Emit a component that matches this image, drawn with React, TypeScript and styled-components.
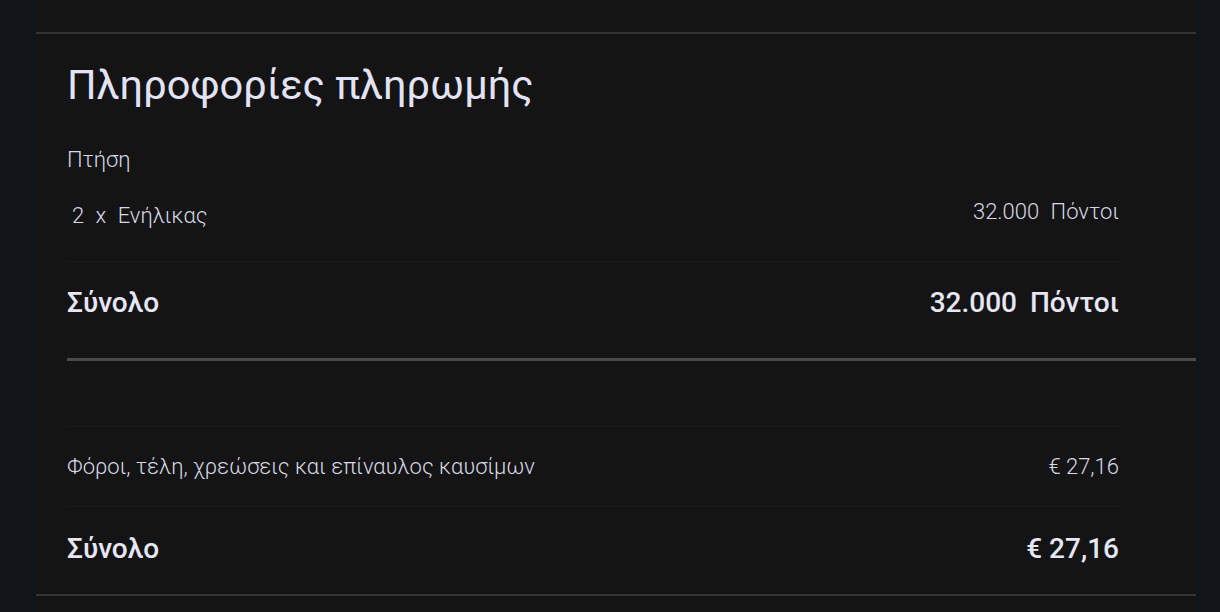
import React from 'react';
import styled, { createGlobalStyle } from 'styled-components';

const GlobalStyle = createGlobalStyle`
  html, body {
    margin: 0;
    padding: 0;
    background-color: #111418;
    font-family: Roboto, 'Noto Sans', sans-serif;
  }
`;

const Page = styled('div')`
  width: 1220px;
  height: 612px;
  overflow: hidden;
  padding-left: 36px;
  padding-right: 24px;
  box-sizing: border-box;
`;

const Panel = styled('div')`
  background-color: #141414;
  display: flex;
  flex-direction: column;
`;

const PrevSection = styled('div')`
  height: 32px;
  border-bottom: 2px solid #333333;
`;

const Section = styled('section')`
  padding-left: 31px;
  display: flex;
  flex-direction: column;
`;

const Title = styled('h2')`
  margin: 0;
  padding: 26px 0 37px;
  font-size: 41.5px;
  font-weight: 400;
  line-height: 50px;
  color: #e3e3f7;
`;

const Group = styled('div')`
  padding-right: 77px;
  display: flex;
  flex-direction: column;
`;

const Label = styled('div')`
  font-size: 22px;
  font-weight: 300;
  line-height: 26px;
  color: #d8d8e4;
`;

const Row = styled('div')<{ $bold?: boolean; $top: number; $bottom: number }>`
  display: flex;
  justify-content: space-between;
  align-items: flex-start;
  padding: ${(p) => p.$top}px 0 ${(p) => p.$bottom}px;
  font-size: ${(p) => (p.$bold ? 28 : 22)}px;
  line-height: ${(p) => (p.$bold ? 32 : 26)}px;
  font-weight: ${(p) => (p.$bold ? 500 : 300)};
  color: ${(p) => (p.$bold ? '#e6e6f6' : '#d8d8e4')};
`;

const Sep = styled('div')`
  height: 1px;
  background-color: #1d1d1d;
`;

const ThickRule = styled('div')`
  height: 3px;
  background-color: #4a4a4a;
`;

const Spacer = styled('div')<{ $h: number }>`
  height: ${(p) => p.$h}px;
`;

const Qty = styled('span')`
  padding-left: 5px;
  word-spacing: 6px;
`;

const Amount = styled('span')<{ $raise?: number; $wide?: boolean }>`
  word-spacing: ${(p) => (p.$wide ? 6 : 0)}px;
  margin-top: ${(p) => -(p.$raise ?? 0)}px;
`;

const BottomBorder = styled('div')`
  height: 2px;
  background-color: #333333;
`;

export default function App() {
  return (
    <>
      <GlobalStyle />
      <Page>
        <Panel>
          <PrevSection />
          <Section>
            <Title>Πληροφορίες πληρωμής</Title>
            <Group>
              <Label>Πτήση</Label>
              <Row $top={30} $bottom={32}>
                <Qty>2 x Ενήλικας</Qty>
                <Amount $wide $raise={4}>32.000 Πόντοι</Amount>
              </Row>
              <Sep />
              <Row $bold $top={25} $bottom={39}>
                <span>Σύνολο</span>
                <Amount $wide>32.000 Πόντοι</Amount>
              </Row>
            </Group>
            <ThickRule />
            <Group>
              <Spacer $h={65} />
              <Sep />
              <Row $top={27} $bottom={26}>
                <span>Φόροι, τέλη, χρεώσεις και επίναυλος καυσίμων</span>
                <Amount>€ 27,16</Amount>
              </Row>
              <Sep />
              <Row $bold $top={26} $bottom={29}>
                <span>Σύνολο</span>
                <Amount>€ 27,16</Amount>
              </Row>
            </Group>
          </Section>
          <BottomBorder />
          <Spacer $h={20} />
        </Panel>
      </Page>
    </>
  );
}
